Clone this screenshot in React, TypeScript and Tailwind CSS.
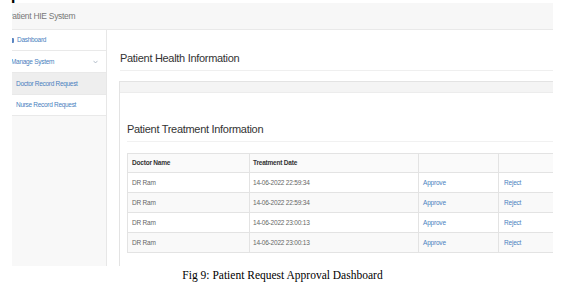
import React from "react";

const rows = [
  { name: "DR Ram", date: "14-06-2022 22:59:34" },
  { name: "DR Ram", date: "14-06-2022 22:59:34" },
  { name: "DR Ram", date: "14-06-2022 23:00:13" },
  { name: "DR Ram", date: "14-06-2022 23:00:13" },
];

const sans = "font-['Liberation_Sans',Arial,sans-serif]";

export default function App() {
  return (
    <div className="w-[565px] h-[291px] bg-white overflow-hidden">
      {/* tail of the line above the figure */}
      <div className="h-[3px] overflow-hidden pl-[11px]">
        <div className="-mt-[13px] font-['Liberation_Serif',serif] font-bold text-[16px] leading-[16px] text-black">p</div>
      </div>

      <div className={`ml-[12px] w-[541px] h-[263px] overflow-hidden flex flex-col ${sans}`}>
        {/* navbar */}
        <div className="h-[27px] shrink-0 flex items-center bg-[#f7f7f7] border-b border-[#e9e9e9]">
          <span className="-ml-[5px] text-[8.5px] tracking-[-0.3px] text-[#777]">Patient HIE System</span>
        </div>

        <div className="flex flex-1 min-h-0">
          {/* sidebar */}
          <div className="w-[95px] shrink-0 bg-[#f8f8f8] border-r border-[#e7e7e7] text-[6.5px] tracking-[-0.3px] text-[#4a7fc0]">
            <div className="h-[21px] flex items-center border-b border-[#e9e9e9] bg-white">
              <span className="-ml-[2px] mr-[3px] w-[4px] h-[5px] rounded-[1px] bg-[#5b86c2]"></span>
              Dashboard
            </div>
            <div className="h-[22px] flex items-center justify-between pr-[8px] border-b border-[#e9e9e9] bg-white">
              <span className="-ml-[1px]">Manage System</span>
              <svg width="5" height="4" viewBox="0 0 5 4" className="text-[#9aa7b8]">
                <path d="M0.5 0.8 L2.5 3 L4.5 0.8" fill="none" stroke="currentColor" strokeWidth="0.7" />
              </svg>
            </div>
            <div className="h-[22px] flex items-center pl-[4px] border-b border-[#e9e9e9] bg-[#eeeeee]">
              Doctor Record Request
            </div>
            <div className="h-[21px] flex items-center pl-[4px] border-b border-[#e9e9e9] bg-white">
              Nurse Record Request
            </div>
          </div>

          {/* main */}
          <div className="flex-1 min-w-0 bg-white pl-[12px] flex flex-col">
            <div className="pt-[21px] pb-[5px] border-b border-[#efefef] ml-[1px] text-[11px] leading-[14px] tracking-[-0.3px] text-[#333]">
              Patient Health Information
            </div>

            <div className="mt-[10px] flex-1 border-l border-t border-[#e3e3e3] flex flex-col">
              <div className="h-[11px] shrink-0 bg-[#f4f4f4] border-b border-[#ececec]"></div>
              <div className="pl-[7px]">
                <div className="pt-[29px] pb-[5px] border-b border-[#f1f1f1] text-[11px] leading-[14px] tracking-[-0.3px] text-[#333]">
                  Patient Treatment Information
                </div>
                <table className="mt-[11px] w-[440px] border-collapse text-[6.5px] tracking-[-0.2px] text-[#666]">
                  <thead>
                    <tr className="h-[19px] bg-[#fafafa]">
                      <th className="w-[122px] border border-[#e3e3e3] pl-[4px] text-left font-bold text-[#333]">Doctor Name</th>
                      <th className="w-[169px] border border-[#e3e3e3] pl-[3px] text-left font-bold text-[#333]">Treatment Date</th>
                      <th className="w-[80px] border border-[#e3e3e3]"></th>
                      <th className="border border-[#e3e3e3]"></th>
                    </tr>
                  </thead>
                  <tbody>
                    {rows.map((r, i) => (
                      <tr key={i} className={i % 2 === 1 ? "h-[20px] bg-[#f9f9f9]" : "h-[20px] bg-white"}>
                        <td className="border border-[#e3e3e3] pl-[4px]">{r.name}</td>
                        <td className="border border-[#e3e3e3] pl-[3px]">{r.date}</td>
                        <td className="border border-[#e3e3e3] pl-[4px] text-[#4a7fc0]">Approve</td>
                        <td className="border border-[#e3e3e3] pl-[5px] text-[#4a7fc0]">Reject</td>
                      </tr>
                    ))}
                  </tbody>
                </table>
              </div>
            </div>
          </div>
        </div>
      </div>

      <div className="mt-[2px] text-center font-['Liberation_Serif','Times_New_Roman',serif] text-[11.5px] leading-[14px] text-black">
        Fig 9: Patient Request Approval Dashboard
      </div>
    </div>
  );
}
